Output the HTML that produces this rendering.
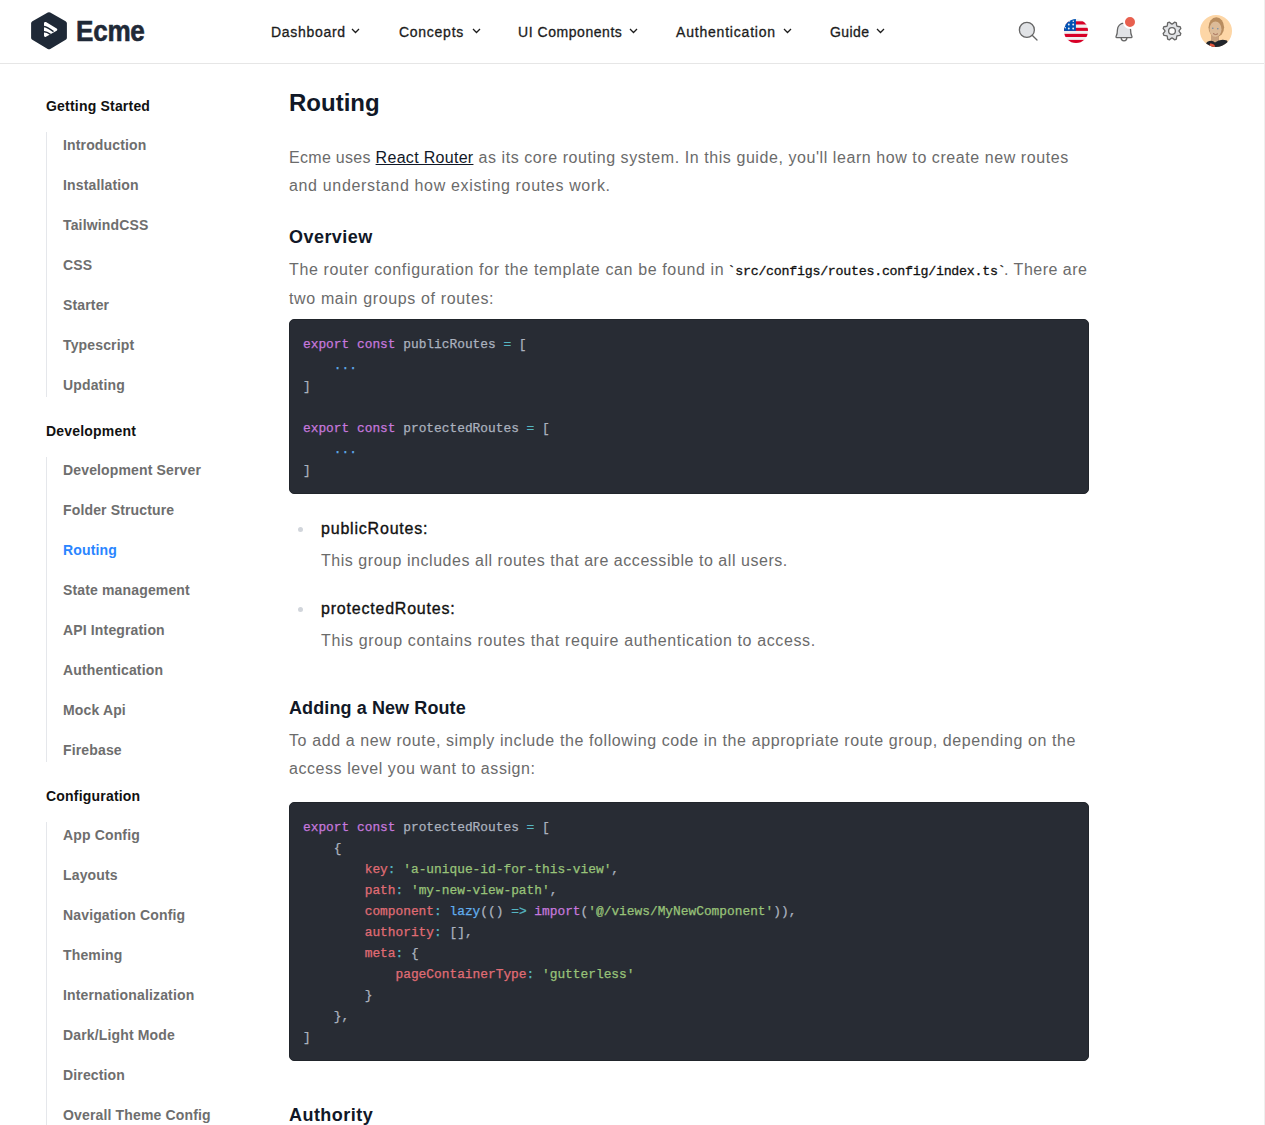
<!DOCTYPE html>
<html>
<head>
<meta charset="utf-8">
<style>
*{box-sizing:border-box;margin:0;padding:0}
html,body{width:1265px;height:1125px;overflow:hidden;background:#fff}
body{font-family:"Liberation Sans",sans-serif;position:relative;color:#6b6b6b}
.abs{position:absolute;white-space:nowrap}
.hdr{position:absolute;left:0;top:0;width:1264px;height:64px;border-bottom:1px solid #e6e6e6;background:#fff}
.rline{position:absolute;left:1264px;top:0;width:1px;height:1125px;background:#efefef}
.logo-t{left:75.5px;top:14px;font-size:29px;line-height:34px;font-weight:bold;color:#1f2937;letter-spacing:-0.3px;-webkit-text-stroke:0.6px #1f2937;transform:scaleX(0.9);transform-origin:0 0}
.nav{top:22px;font-size:14px;line-height:20px;font-weight:normal;color:#1c1c1c;-webkit-text-stroke:0.3px #1c1c1c;letter-spacing:0.45px}
.chev{position:absolute;top:28px;width:9px;height:6px}
.sb-h{font-size:14px;line-height:20px;font-weight:bold;color:#111111;left:46px;letter-spacing:0.2px}
.sb-i{font-size:14px;line-height:20px;font-weight:bold;color:#6e6e6e;left:63px;letter-spacing:0.15px}
.sb-line{position:absolute;left:46px;width:1px;background:#e5e7eb}
.h1{left:289px;font-size:24px;line-height:32px;font-weight:bold;color:#111827}
.h3{left:289px;font-size:18px;line-height:28px;font-weight:bold;color:#111827}
.p{left:289px;font-size:16px;line-height:28px;color:#6b6b6b}
.code{position:absolute;left:289px;width:800px;background:#282c34;border:1px solid #21252b;border-radius:5px;padding:14px 0 0 13px;font-family:"Liberation Mono",monospace;font-size:12.85px;line-height:21px;color:#abb2bf;white-space:pre;-webkit-text-stroke-width:0.25px}
.k{color:#c678dd}.o{color:#56b6c2}.s{color:#98c379}.pr{color:#e06c75}.f{color:#61aeee}
.dot{position:absolute;left:298px;width:5px;height:5px;border-radius:50%;background:#d1d5db}
.li-t{left:321px;font-size:16px;line-height:24px;font-weight:normal;color:#111111;-webkit-text-stroke:0.35px #111111}
.li-d{left:321px;font-size:16px;line-height:28px;color:#6b6b6b}
a{color:#111827;text-decoration:underline}
</style>
</head>
<body>
<div class="hdr"></div>
<div class="rline"></div>

<!-- logo -->
<svg class="abs" style="left:28px;top:8px" width="44" height="46" viewBox="0 0 44 46">
  <polygon points="21,6.8 36.4,15.35 36.4,29.65 21,38.8 5.6,29.65 5.6,15.35" fill="#1f2937" stroke="#1f2937" stroke-width="5" stroke-linejoin="round"/>
  <polygon points="17.3,15.2 28,21.6 17.3,27.6" fill="#fff" stroke="#fff" stroke-width="2.6" stroke-linejoin="round"/>
  <path d="M14.5 18.6 Q17.5 17.6 25.5 23.6" fill="none" stroke="#1f2937" stroke-width="1.5"/>
  <path d="M14.5 24.3 Q17 22.8 22.5 26.3" fill="none" stroke="#1f2937" stroke-width="1.5"/>
</svg>
<div class="abs logo-t">Ecme</div>

<!-- nav -->
<div class="abs nav" style="left:271px;letter-spacing:0.7px">Dashboard</div>
<div class="abs nav" style="left:399px;letter-spacing:0.73px">Concepts</div>
<div class="abs nav" style="left:518px;letter-spacing:0.55px">UI Components</div>
<div class="abs nav" style="left:676px;letter-spacing:0.8px">Authentication</div>
<div class="abs nav" style="left:830px;letter-spacing:0.42px">Guide</div>
<svg class="chev" style="left:351px" viewBox="0 0 9 6"><path d="M1 1 L4.5 4.5 L8 1" fill="none" stroke="#1c1c1c" stroke-width="1.3"/></svg>
<svg class="chev" style="left:471.5px" viewBox="0 0 9 6"><path d="M1 1 L4.5 4.5 L8 1" fill="none" stroke="#1c1c1c" stroke-width="1.3"/></svg>
<svg class="chev" style="left:629px" viewBox="0 0 9 6"><path d="M1 1 L4.5 4.5 L8 1" fill="none" stroke="#1c1c1c" stroke-width="1.3"/></svg>
<svg class="chev" style="left:783px" viewBox="0 0 9 6"><path d="M1 1 L4.5 4.5 L8 1" fill="none" stroke="#1c1c1c" stroke-width="1.3"/></svg>
<svg class="chev" style="left:876px" viewBox="0 0 9 6"><path d="M1 1 L4.5 4.5 L8 1" fill="none" stroke="#1c1c1c" stroke-width="1.3"/></svg>

<!-- header icons -->
<svg class="abs" style="left:1015.5px;top:18.5px" width="24" height="24" viewBox="0 0 256 256">
  <circle cx="116" cy="116" r="80" fill="#6b7280" fill-opacity="0.2"/>
  <circle cx="116" cy="116" r="80" fill="none" stroke="#666" stroke-width="14"/>
  <line x1="172.6" y1="172.6" x2="224" y2="224" stroke="#666" stroke-width="14" stroke-linecap="round"/>
</svg>
<svg class="abs" style="left:1064px;top:19px" width="24" height="24" viewBox="0 0 24 24">
  <defs><clipPath id="fc"><circle cx="12" cy="12" r="12"/></clipPath></defs>
  <g clip-path="url(#fc)">
    <rect x="0" y="0" width="24" height="24" fill="#f0f0f0"/>
    <rect x="0" y="2.3" width="24" height="3.2" fill="#d80027"/>
    <rect x="0" y="8.8" width="24" height="3.1" fill="#d80027"/>
    <rect x="0" y="14.85" width="24" height="3.15" fill="#d80027"/>
    <rect x="0" y="20.9" width="24" height="3.1" fill="#d80027"/>
    <rect x="0" y="0" width="11.9" height="11.9" fill="#0052b4"/>
    <g fill="#f0f0f0"><circle cx="4.8" cy="5.5" r="0.95"/><circle cx="9.2" cy="5.5" r="0.95"/><circle cx="4.8" cy="9.5" r="0.95"/><circle cx="9.2" cy="9.5" r="0.95"/><circle cx="9.3" cy="2.2" r="0.8"/><circle cx="5.5" cy="2" r="0.7"/><circle cx="1.3" cy="8.8" r="0.7"/></g>
  </g>
</svg>
<svg class="abs" style="left:1112px;top:19.5px" width="24" height="24" viewBox="0 0 256 256">
  <path d="M58 104a70 70 0 0 1 140 0c0 36 7.5 60 14.5 72A8 8 0 0 1 206 188H50a8 8 0 0 1-6.5-12C50.5 164 58 140 58 104Z" fill="#6b7280" fill-opacity="0.2" stroke="#666" stroke-width="14" stroke-linejoin="round"/>
  <path d="M98 192a30 30 0 0 0 60 0" fill="none" stroke="#666" stroke-width="14" stroke-linecap="round"/>
</svg>
<div class="abs" style="left:1123px;top:15px;width:14px;height:14px;border-radius:50%;background:#e8604f;border:2px solid #fff"></div>
<svg class="abs" style="left:1160px;top:19px" width="24" height="24" viewBox="0 0 256 256">
  <path d="M155.3,33.9 L175.2,42.1 Q175.3,63.5 180.3,75.7 Q192.5,80.7 213.9,80.8 L222.1,100.7 Q207.1,115.8 202.0,128.0 Q207.1,140.2 222.1,155.3 L213.9,175.2 Q192.5,175.3 180.3,180.3 Q175.3,192.5 175.2,213.9 L155.3,222.1 Q140.2,207.1 128.0,202.0 Q115.8,207.1 100.7,222.1 L80.8,213.9 Q80.7,192.5 75.7,180.3 Q63.5,175.3 42.1,175.2 L33.9,155.3 Q48.9,140.2 54.0,128.0 Q48.9,115.8 33.9,100.7 L42.1,80.8 Q63.5,80.7 75.7,75.7 Q80.7,63.5 80.8,42.1 L100.7,33.9 Q115.8,48.9 128.0,54.0 Q140.2,48.9 155.3,33.9 Z" fill="#6b7280" fill-opacity="0.2" stroke="#666" stroke-width="14" stroke-linejoin="round"/>
  <circle cx="128" cy="128" r="36" fill="#fff" stroke="#666" stroke-width="14"/>
</svg>
<svg class="abs" style="left:1200px;top:15px" width="32" height="32" viewBox="0 0 32 32">
  <defs><clipPath id="av"><circle cx="16" cy="16" r="16"/></clipPath></defs>
  <g clip-path="url(#av)">
    <rect width="32" height="32" fill="#fdd6a6"/>
    <rect x="11" y="20" width="8" height="8" fill="#c9a27f"/>
    <ellipse cx="16.3" cy="12.3" rx="7.8" ry="10" fill="#b98d5f"/>
    <ellipse cx="15.5" cy="14.2" rx="6" ry="7.8" fill="#dcbb98"/>
    <circle cx="12.8" cy="13.3" r="0.8" fill="#6e8aa8"/>
    <circle cx="17.8" cy="13.8" r="0.8" fill="#6e8aa8"/>
    <path d="M13 18.5 Q15.5 20.5 18 18.8" fill="none" stroke="#a66f5a" stroke-width="1"/>
    <path d="M3 34 L7 27 Q12 24.5 15 27.5 Q20 23.5 27 25.5 L31 34 Z" fill="#22252c"/>
    <path d="M9 34 L10 28.5 Q12.5 28 14.5 30 L15.5 34 Z" fill="#e5553c"/>
  </g>
</svg>

<!-- sidebar -->
<div class="abs sb-h" style="top:96px">Getting Started</div>
<div class="sb-line" style="top:132px;height:265px"></div>
<div class="abs sb-i" style="top:135px">Introduction</div>
<div class="abs sb-i" style="top:175px">Installation</div>
<div class="abs sb-i" style="top:215px">TailwindCSS</div>
<div class="abs sb-i" style="top:255px">CSS</div>
<div class="abs sb-i" style="top:295px">Starter</div>
<div class="abs sb-i" style="top:335px">Typescript</div>
<div class="abs sb-i" style="top:375px">Updating</div>

<div class="abs sb-h" style="top:421px">Development</div>
<div class="sb-line" style="top:457px;height:305px"></div>
<div class="abs sb-i" style="top:460px">Development Server</div>
<div class="abs sb-i" style="top:500px">Folder Structure</div>
<div class="abs sb-i" style="top:540px;color:#2a85ff">Routing</div>
<div class="abs sb-i" style="top:580px">State management</div>
<div class="abs sb-i" style="top:620px">API Integration</div>
<div class="abs sb-i" style="top:660px">Authentication</div>
<div class="abs sb-i" style="top:700px">Mock Api</div>
<div class="abs sb-i" style="top:740px">Firebase</div>

<div class="abs sb-h" style="top:786px">Configuration</div>
<div class="sb-line" style="top:822px;height:303px"></div>
<div class="abs sb-i" style="top:825px">App Config</div>
<div class="abs sb-i" style="top:865px">Layouts</div>
<div class="abs sb-i" style="top:905px">Navigation Config</div>
<div class="abs sb-i" style="top:945px">Theming</div>
<div class="abs sb-i" style="top:985px">Internationalization</div>
<div class="abs sb-i" style="top:1025px">Dark/Light Mode</div>
<div class="abs sb-i" style="top:1065px">Direction</div>
<div class="abs sb-i" style="top:1105px">Overall Theme Config</div>

<!-- main -->
<div class="abs h1" id="h1" style="top:87px">Routing</div>
<div class="abs p" id="p1a" style="top:144px;letter-spacing:0.57px"><span style="letter-spacing:0.3px">Ecme uses </span><a style="letter-spacing:0.3px">React Router</a> as its core routing system. In this guide, you'll learn how to create new routes</div>
<div class="abs p" id="p1b" style="top:172px;letter-spacing:0.66px">and understand how existing routes work.</div>
<div class="abs h3" id="h3a" style="top:223px;letter-spacing:0.46px">Overview</div>
<div class="abs p" id="p2a" style="top:256px;letter-spacing:0.63px">The router configuration for the template can be found in</div>
<div class="abs p" id="p2c" style="top:258px;left:727.5px;font-family:'Liberation Mono',monospace;font-size:13.3px;letter-spacing:-0.26px;color:#111;-webkit-text-stroke:0.3px #111">`src/configs/routes.config/index.ts`</div>
<div class="abs p" id="p2d" style="top:256px;left:1004px;letter-spacing:0.5px">. There are</div>
<div class="abs p" id="p2b" style="top:285px;letter-spacing:0.64px">two main groups of routes:</div>

<div class="code" style="top:319px;height:175px"><span class="k">export</span> <span class="k">const</span> publicRoutes <span class="o">=</span> [
    <span class="f">...</span>
]

<span class="k">export</span> <span class="k">const</span> protectedRoutes <span class="o">=</span> [
    <span class="f">...</span>
]</div>

<div class="dot" style="top:527px"></div>
<div class="abs li-t" id="l1t" style="top:517px;letter-spacing:0.8px">publicRoutes:</div>
<div class="abs li-d" id="l1d" style="top:547px;letter-spacing:0.54px">This group includes all routes that are accessible to all users.</div>
<div class="dot" style="top:607px"></div>
<div class="abs li-t" id="l2t" style="top:597px;letter-spacing:0.79px">protectedRoutes:</div>
<div class="abs li-d" id="l2d" style="top:627px;letter-spacing:0.62px">This group contains routes that require authentication to access.</div>

<div class="abs h3" id="h3b" style="top:694px;letter-spacing:0.1px">Adding a New Route</div>
<div class="abs p" id="p3a" style="top:727px;letter-spacing:0.6px">To add a new route, simply include the following code in the appropriate route group, depending on the</div>
<div class="abs p" id="p3b" style="top:755px;letter-spacing:0.56px">access level you want to assign:</div>

<div class="code" style="top:802px;height:259px"><span class="k">export</span> <span class="k">const</span> protectedRoutes <span class="o">=</span> [
    {
        <span class="pr">key</span><span class="o">:</span> <span class="s">'a-unique-id-for-this-view'</span>,
        <span class="pr">path</span><span class="o">:</span> <span class="s">'my-new-view-path'</span>,
        <span class="pr">component</span><span class="o">:</span> <span class="f">lazy</span>(() <span class="o">=&gt;</span> <span class="k">import</span>(<span class="s">'@/views/MyNewComponent'</span>)),
        <span class="pr">authority</span><span class="o">:</span> [],
        <span class="pr">meta</span><span class="o">:</span> {
            <span class="pr">pageContainerType</span><span class="o">:</span> <span class="s">'gutterless'</span>
        }
    },
]</div>

<div class="abs h3" id="h3c" style="top:1101px;letter-spacing:0.46px">Authority</div>


</body>
</html>
